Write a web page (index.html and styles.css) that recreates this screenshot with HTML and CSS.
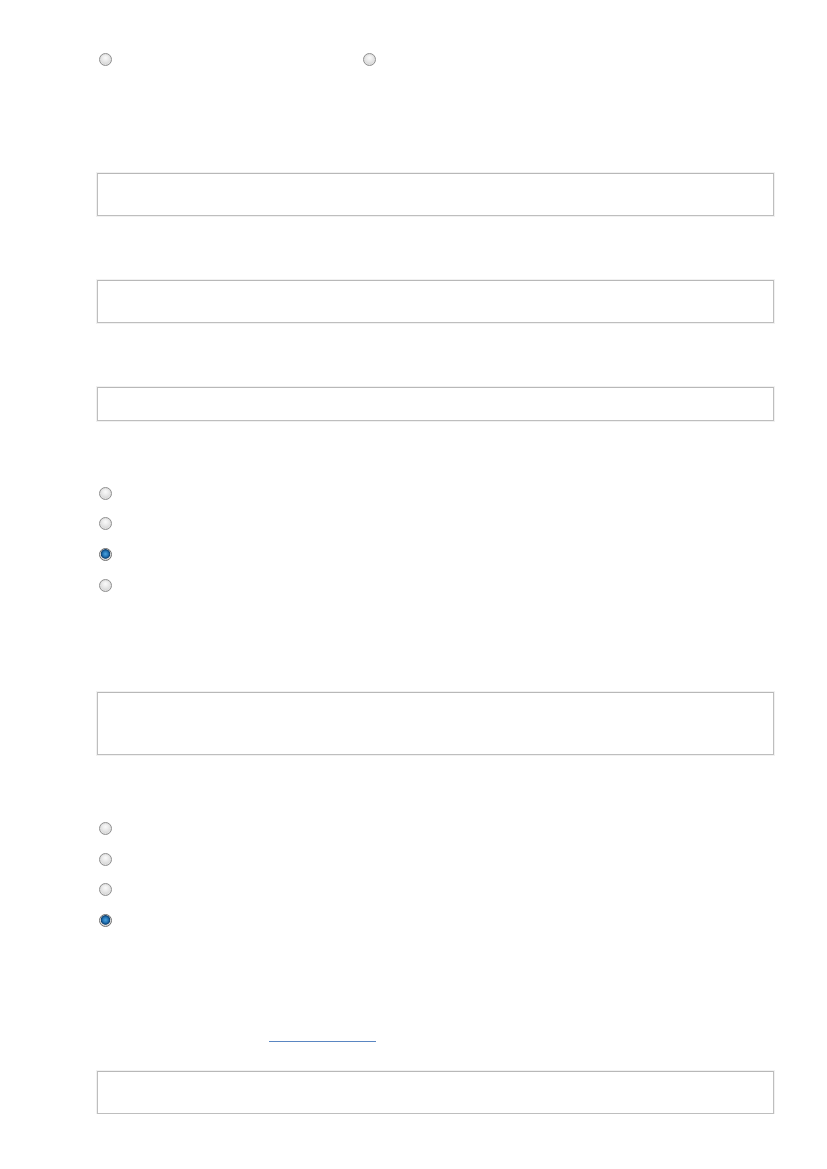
FILE: index.html
```html
<!DOCTYPE html>
<html>
<head>
<meta charset="utf-8">
<link rel="stylesheet" href="styles.css">
</head>
<body>
<form class="form">
  <div class="inline-radios">
    <label class="opt"><input type="radio" name="a" class="radio"></label>
    <label class="opt"><input type="radio" name="a" class="radio"></label>
  </div>

  <div class="field field-first"><input type="text" class="box box-42"></div>
  <div class="field"><input type="text" class="box box-42"></div>
  <div class="field"><input type="text" class="box box-33"></div>

  <div class="radio-list list-1">
    <label class="row row-short"><input type="radio" name="b" class="radio"></label>
    <label class="row"><input type="radio" name="b" class="radio"></label>
    <label class="row"><input type="radio" name="b" class="radio" checked></label>
    <label class="row"><input type="radio" name="b" class="radio"></label>
  </div>

  <div class="field field-area"><textarea class="box box-62"></textarea></div>

  <div class="radio-list list-2">
    <label class="row"><input type="radio" name="c" class="radio"></label>
    <label class="row row-short"><input type="radio" name="c" class="radio"></label>
    <label class="row"><input type="radio" name="c" class="radio"></label>
    <label class="row"><input type="radio" name="c" class="radio" checked></label>
  </div>

  <div class="link-line"><a class="blank-link" href="#"></a></div>

  <div class="field field-last"><input type="text" class="box box-42"></div>
</form>
</body>
</html>
```

FILE: styles.css
```css
html, body {
  margin: 0;
  padding: 0;
  background: #ffffff;
  font-family: "Liberation Sans", Arial, sans-serif;
}

.form {
  width: 677px;
  margin-left: 97px;
  padding-top: 53px;
  display: flex;
  flex-direction: column;
}

.inline-radios {
  display: flex;
  gap: 251px;
  padding-left: 2px;
  height: 13px;
}

.opt, .row {
  display: flex;
  align-items: center;
}

.radio {
  -webkit-appearance: none;
  appearance: none;
  margin: 0;
  width: 13px;
  height: 13px;
  border-radius: 50%;
  border: 1px solid #8e8e8e;
  box-sizing: border-box;
  background: radial-gradient(circle at 50% 35%, #fafafa 0%, #e6e6e6 45%, #c4c4c4 100%);
  box-shadow: inset 0 0 0 1px #e2e2e2;
}

.radio:checked {
  border-color: #6f6f6f;
  background: radial-gradient(circle at 50% 45%, #4aa3e0 0%, #1f6fb0 36%, #0c3f6e 54%, #e0e0e0 62%, #cacaca 100%);
  box-shadow: none;
}

.field {
  margin-top: 64px;
  display: flex;
}

.field-first {
  margin-top: 107px;
}

.box {
  display: block;
  width: 677px;
  margin: 0;
  padding: 0;
  border: 1px solid #bebebe;
  border-top-color: #b8b8b8;
  box-sizing: border-box;
  background: #ffffff;
  box-shadow: 0 0 0 1px #f1f1f1;
  resize: none;
  font: inherit;
}

.box-42 { height: 43px; }
.box-33 { height: 34px; }
.box-62 { height: 63px; }

.radio-list {
  display: flex;
  flex-direction: column;
  padding-left: 2px;
}

.list-1 { margin-top: 66px; }
.list-2 { margin-top: 67px; }

.row {
  height: 31px;
  align-items: flex-start;
}

.row-short {
  height: 30px;
}

.row:last-child {
  height: 13px;
}

.field-area {
  margin-top: 100px;
}

.link-line {
  margin-top: 114px;
  padding-left: 172px;
  height: 1px;
  display: flex;
}

.blank-link {
  display: block;
  width: 107px;
  height: 1px;
  background: #5a86c2;
}

.field-last {
  margin-top: 29px;
}
```
